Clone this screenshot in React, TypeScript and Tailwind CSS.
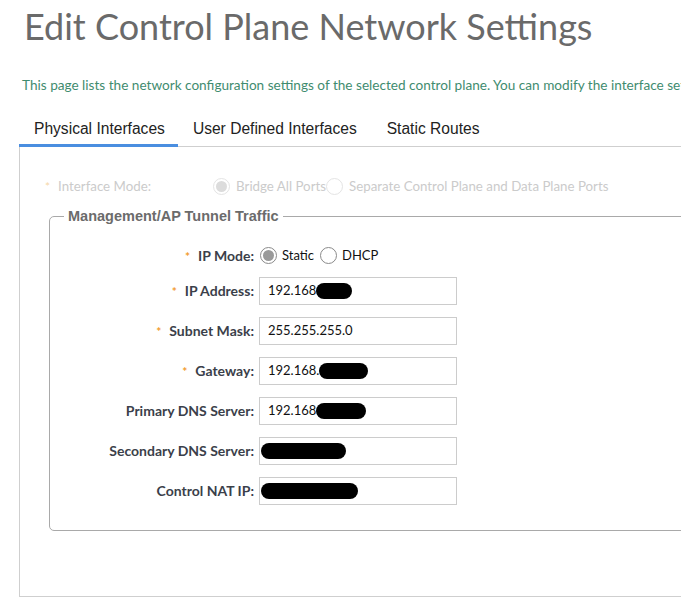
import React from 'react';

const sans = { fontFamily: 'Lato, "Noto Sans", sans-serif' };
const arial = { fontFamily: '"Liberation Sans", Arial, sans-serif' };

type Row = {
  label: string;
  required?: boolean;
  prefix?: string;
  blob?: string;
};

// values are masked in the screenshot
const rows: Row[] = [
  { label: 'IP Address', required: true, prefix: '192.168', blob: 'w-[36px]' },
  { label: 'Subnet Mask', required: true, prefix: '255.255.255.0' },
  { label: 'Gateway', required: true, prefix: '192.168.', blob: 'w-[49px]' },
  { label: 'Primary DNS Server', prefix: '192.168', blob: 'w-[50px]' },
  { label: 'Secondary DNS Server', blob: 'w-[85px]' },
  { label: 'Control NAT IP', blob: 'w-[97px]' },
];

const Radio = ({ checked, disabled }: { checked?: boolean; disabled?: boolean }) => (
  <span
    className={`inline-flex h-[17px] w-[17px] shrink-0 items-center justify-center rounded-full border ${
      disabled ? 'border-[#e4e4e4]' : 'border-[#8a8a8a]'
    } bg-white`}
  >
    {checked && (
      <span className={`h-[11px] w-[11px] rounded-full ${disabled ? 'bg-[#dcdcdc]' : 'bg-[#9a9a9a]'}`} />
    )}
  </span>
);

const Star = ({ light }: { light?: boolean }) => (
  <span className={`mr-[8px] text-[12px] ${light ? 'text-[#f6d7a8]' : 'text-[#f29a2e]'}`}>*</span>
);

export default function App() {
  return (
    <div className="h-[598px] w-[681px] overflow-hidden bg-white whitespace-nowrap">
      <h1 className="pl-[24px] pt-[1px] text-[36px] leading-[50px] text-[#6a6a6a]" style={sans}>
        Edit Control Plane Network Settings
      </h1>

      <p className="mt-[25px] pl-[22px] text-[13.6px] leading-[18px] text-[#3f8c6f]" style={sans}>
        This page lists the network configuration settings of the selected control plane. You can modify the interface settings
      </p>

      <div
        className="ml-[19px] mt-[22px] flex w-[800px] border-b border-[#cfcfcf] text-[15.6px] text-[#222]"
        style={arial}
      >
        <div className="-mb-px h-[31px] border-b-[3px] border-[#4a8ee0] pl-[15px] pr-[13px] pt-[1px]">
          Physical Interfaces
        </div>
        <div className="h-[29px] px-[15px] pt-[1px]">User Defined Interfaces</div>
        <div className="h-[29px] px-[15px] pt-[1px]">Static Routes</div>
      </div>

      <div className="ml-[19px] h-[450px] w-[800px] border-b border-l border-[#cfcfcf]">
        <div className="flex items-center pl-[25px] pt-[30px] text-[13.3px] text-[#cbcbcb]" style={sans}>
          <Star light />
          <span className="w-[155px]">Interface Mode:</span>
          <Radio checked disabled />
          <span className="ml-[6px]">Bridge All Ports</span>
          <Radio disabled />
          <span className="ml-[6px]">Separate Control Plane and Data Plane Ports</span>
        </div>

        <fieldset className="ml-[29px] mt-[9px] h-[325px] rounded-[5px] border border-[#a9a9a9] pl-0">
          <legend className="ml-[14px] px-[4px] text-[14.5px] font-bold text-[#6b6b6b]" style={arial}>
            Management/AP Tunnel Traffic
          </legend>

          <div className="pt-[14px] text-[13px] text-[#3b3f4a]" style={sans}>
            <div className="flex h-[28px] items-center">
              <div className="w-[204px] text-right text-[14px] font-bold">
                <Star />
                IP Mode:
              </div>
              <div className="ml-[6px] flex items-center text-[#111]">
                <Radio checked />
                <span className="ml-[5px]">Static</span>
                <span className="ml-[6px] flex">
                  <Radio />
                </span>
                <span className="ml-[5px]">DHCP</span>
              </div>
            </div>

            <div className="mt-[7px] flex flex-col gap-[12px]">
              {rows.map((r) => (
                <div key={r.label} className="flex h-[28px] items-center">
                  <div className="w-[204px] text-right text-[14px] font-bold">
                    {r.required && <Star />}
                    {r.label}:
                  </div>
                  <div className="ml-[5px] flex h-[28px] w-[198px] items-center border border-[#cccccc] pl-[8px] text-[#111]">
                    {r.prefix && <span>{r.prefix}</span>}
                    {r.blob && (
                      <span
                        className={`h-[16px] rounded-full bg-black ${r.blob} ${r.prefix ? '' : '-ml-[7px]'}`}
                      />
                    )}
                  </div>
                </div>
              ))}
            </div>
          </div>
        </fieldset>
      </div>
    </div>
  );
}
